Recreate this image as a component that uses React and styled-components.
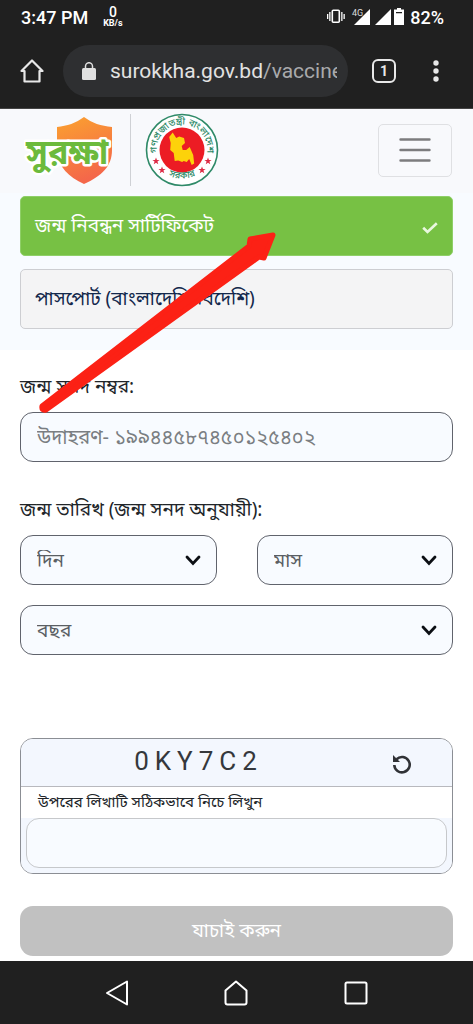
import React, { useState } from "react";
import styled, { createGlobalStyle } from "styled-components";

const bangla = `"Noto Sans Bengali", "Noto Sans", "Open Sans", sans-serif`

const options = [
    { name: 'birth', label: 'জন্ম নিবন্ধন সার্টিফিকেট' },
    { name: 'passport', label: 'পাসপোর্ট (বাংলাদেশি/বিদেশি)' },
]

export default function App(){
    const [type, setType] = useState('birth')
    const [captcha, setCaptcha] = useState('')

    return(
        <Page>
            <GlobalStyle />
            <StatusBar />
            <BrowserBar />
            <SiteHeader />
            <Options>
                {options.map((option) => (
                    <Option
                        key={option.name}
                        type="button"
                        $active={type === option.name}
                        onClick={() => setType(option.name)}
                    >
                        {option.label}
                        {type === option.name ? <CheckIcon /> : ''}
                    </Option>
                ))}
                <Arrow />
            </Options>
            <Form onSubmit={(e) => e.preventDefault()}>
                <Label htmlFor="number">জন্ম সনদ নম্বর:</Label>
                <Input id="number" placeholder="উদাহরণ- ১৯৯৪৪৫৮৭৪৫০১২৫৪০২" />
                <DateGroup>
                    <Legend>জন্ম তারিখ (জন্ম সনদ অনুযায়ী):</Legend>
                    <DateGrid>
                        <SelectBox label="দিন" />
                        <SelectBox label="মাস" />
                        <SelectBox label="বছর" wide />
                    </DateGrid>
                </DateGroup>
                <Captcha>
                    <CaptchaHead>
                        <Code>0KY7C2</Code>
                        <Refresh type="button" aria-label="Refresh"><RefreshIcon /></Refresh>
                    </CaptchaHead>
                    <CaptchaLabel htmlFor="captcha">উপরের লিখাটি সঠিকভাবে নিচে লিখুন</CaptchaLabel>
                    <CaptchaBody>
                        <CaptchaInput id="captcha" value={captcha} onChange={(e) => setCaptcha(e.target.value)} />
                    </CaptchaBody>
                </Captcha>
                <Submit type="submit">যাচাই করুন</Submit>
            </Form>
            <NavBar />
        </Page>
    )
}

function StatusBar(){
    return(
        <Status>
            <Clock>3:47 PM</Clock>
            <Speed><b>0</b><small>KB/s</small></Speed>
            <svg width="80" height="20" viewBox="0 0 80 20" fill="#fff">
                <rect x="6.3" y="3.3" width="7" height="12" rx="1" fill="none" stroke="#fff" strokeWidth="1.6" />
                <path d="M1 7h1.3v5H1zM3.2 5h1.3v9H3.2zM15.2 5h1.3v9h-1.3zM17.5 7h1.3v5h-1.3z" />
                <text x="26" y="9" fontSize="9" fontFamily="Roboto, sans-serif" fill="#ddd">4G</text>
                <path d="M44 2v16H28zM65 2v16H49z" />
                <path d="M71 1h4v1.5h3V18H68V2.5h3zM70 5v1.3h6V5z" fillRule="evenodd" />
            </svg>
            <Battery>82%</Battery>
        </Status>
    )
}

function BrowserBar(){
    return(
        <Browser>
            <IconButton type="button" aria-label="Home">
                <svg width="24" height="24" viewBox="0 0 24 24" fill="none" stroke="#e8e8e8" strokeWidth="2.2" strokeLinejoin="round" strokeLinecap="round">
                    <path d="M1.500 12L12 1.500 22.500 12H19.500V22.500H4.500V12z" />
                </svg>
            </IconButton>
            <Address>
                <svg width="14" height="18" viewBox="0 0 14 18">
                    <rect y="6" width="14" height="12" rx="1.5" fill="#e0e0e0" />
                    <path d="M3.500 7V4.200a3.500 3.500 0 0 1 7 0V7" fill="none" stroke="#e0e0e0" strokeWidth="1.5" />
                </svg>
                <Url>surokkha.gov.bd<span>/vaccine</span></Url>
            </Address>
            <TabCount type="button">1</TabCount>
            <IconButton type="button" aria-label="Menu">
                <svg width="8" height="24" viewBox="0 0 8 24" fill="#e8e8e8">
                    <circle cx="4" cy="4" r="2.7" />
                    <circle cx="4" cy="12" r="2.7" />
                    <circle cx="4" cy="20" r="2.7" />
                </svg>
            </IconButton>
        </Browser>
    )
}

function SiteHeader(){
    return(
        <Header>
            <Logo />
            <Divider />
            <Seal />
            <Toggler type="button" aria-label="Toggle navigation">
                <svg width="32" height="26" viewBox="0 0 32 26" stroke="#7c7c7e" strokeWidth="2.4" strokeLinecap="round">
                    <path d="M1.500 2.500h29M1.500 13h29M1.500 23.500h29" />
                </svg>
            </Toggler>
        </Header>
    )
}

function Logo(){
    return(
        <svg width="90" height="72" viewBox="0 0 90 72">
            <defs>
                <linearGradient id="shield" x1="0" y1="0" x2="0.3" y2="1">
                    <stop offset="0" stopColor="#fba22f" />
                    <stop offset="1" stopColor="#f4674a" />
                </linearGradient>
            </defs>
            <path d="M60 3c8 6 17 9 28 10v23c0 16-10 26-28 34-15-7-26-17-27-32V13c10-1 19-4 27-10z" fill="url(#shield)" />
            <text
                x="2" y="50" fontFamily={bangla} fontSize="34" fontWeight="700"
                fill="#6cba3c" stroke="#fff" strokeWidth="5" strokeLinejoin="round" paintOrder="stroke"
            >
                সুরক্ষা
            </text>
        </svg>
    )
}

function Seal(){
    return(
        <svg width="74" height="74" viewBox="0 0 74 74">
            <defs>
                <path id="top" d="M13.400 46A25.300 25.300 0 1 1 60.600 46" />
                <path id="bottom" d="M10 50.500A31.800 31.800 0 0 0 64 50.500" />
            </defs>
            <circle cx="37" cy="37" r="35.5" fill="#fff" stroke="#2f8a68" strokeWidth="1.6" />
            <circle cx="37" cy="37" r="22.5" fill="#ec1c24" />
            <path d="M27.700 19.500l3.500 5.500 3-1.500 4.800 1.500 1 5-3.300 3 1 4 3.500 0 3.500-3 3.500 8 1 8.500-2.500 1.500-2.500-6-2.500 3-3-1-1.500 1-4-1.500-3.500.5-1-8-3.500-3 .5-7-1.500-6z" fill="#fdd20a" />
            <g fontFamily={bangla} fontWeight="500" fill="#2f8a68" fontSize="9.5">
                <text textAnchor="middle"><textPath href="#top" startOffset="50%">গণপ্রজাতন্ত্রী বাংলাদেশ</textPath></text>
                <text textAnchor="middle"><textPath href="#bottom" startOffset="50%">সরকার</textPath></text>
            </g>
            <g fill="#dd2c45">
                {[[11, 48], [17, 57], [57, 57], [63, 48]].map(([x, y]) => (
                    <path key={x} transform={`translate(${x} ${y}) scale(1.2)`} d="M0-3L.8-.9 3-.9 1.200.5 1.900 2.700 0 1.400-1.900 2.700-1.200.5-3-.9-.8-.9z" />
                ))}
            </g>
        </svg>
    )
}

function CheckIcon(){
    return(
        <svg width="16" height="12" viewBox="0 0 16 12" fill="none" stroke="#e9f8df" strokeWidth="2.6">
            <path d="M1.200 5.800L5.500 10 14.800 1.200" />
        </svg>
    )
}

function RefreshIcon(){
    return(
        <svg width="20" height="20" viewBox="0 0 20 20" fill="none" stroke="#303236" strokeWidth="2.6">
            <path d="M2.300 11A7.700 7.700 0 1 0 4.600 5.200" />
            <path d="M1 1V8H8z" fill="#303236" stroke="none" />
        </svg>
    )
}

function Arrow(){
    return(
        <ArrowSvg width="240" height="184" viewBox="0 0 240 184" fill="#fc2115" stroke="#fc2115" strokeWidth="5" strokeLinejoin="round">
            <path d="M4 175L211 15 212 8 235 4 226 27 221 26 8 179Q3 180 4 175z" />
        </ArrowSvg>
    )
}

function SelectBox({ label, wide }){
    return(
        <SelectWrap $wide={wide}>
            <Select aria-label={label} defaultValue="">
                <option value="">{label}</option>
            </Select>
            <svg width="16" height="11" viewBox="0 0 16 11" fill="none" stroke="#0c0f14" strokeWidth="2.8" strokeLinecap="round">
                <path d="M2 2L8 8.500 14 2" />
            </svg>
        </SelectWrap>
    )
}

function NavBar(){
    return(
        <Nav>
            <IconButton type="button" aria-label="Back">
                <NavIcon viewBox="0 0 26 26"><path d="M23 1.500V24.500L3 13z" /></NavIcon>
            </IconButton>
            <IconButton type="button" aria-label="Home screen">
                <NavIcon viewBox="0 0 26 26"><path d="M2.500 10.500L13 1.500 23.500 10.500V22.500a2 2 0 0 1-2 2H4.500a2 2 0 0 1-2-2z" /></NavIcon>
            </IconButton>
            <IconButton type="button" aria-label="Recent apps">
                <NavIcon viewBox="0 0 26 26"><rect x="2.5" y="2.5" width="21" height="21" rx="1.5" /></NavIcon>
            </IconButton>
        </Nav>
    )
}


const GlobalStyle = createGlobalStyle`
    *{
        box-sizing: border-box;
    }

    body{
        margin: 0;
        background-color: white;
    }

    button{
        font: inherit;
        cursor: pointer;
    }

    svg{
        display: block;
        flex: none;
    }
`;

const Page = styled.div`
    display: flex;
    flex-direction: column;
    min-height: 100vh;
    overflow-x: hidden;

    font-family: ${bangla};
    font-size: 19px;
    color: #212529;
`;

const Status = styled.div`
    display: flex;
    align-items: center;
    height: 34px;
    padding: 0 29px 0 21px;

    font-family: Roboto, sans-serif;
    background-color: #202020;
    color: white;
`;

const Clock = styled.span`
    font-size: 18px;
    font-weight: 500;
`;

const Speed = styled.span`
    display: flex;
    flex-direction: column;
    align-items: center;
    margin: 0 auto 0 15px;

    b{
        font-size: 14px;
        line-height: 13px;
        font-weight: 500;
    }

    small{
        font-size: 9px;
        line-height: 9px;
        font-weight: 700;
    }
`;

const Battery = styled.span`
    margin-left: 4px;
    font-size: 18px;
    font-weight: 500;
`;

const Browser = styled.div`
    display: flex;
    align-items: center;
    height: 75px;
    padding: 0 33px 0 20px;

    font-family: Roboto, sans-serif;
    background-color: #202020;
    border-bottom: 1px solid #444;
`;

const IconButton = styled.button`
    padding: 0;
    border: none;
    background: none;
`;

const Address = styled.div`
    display: flex;
    flex: 1;
    align-items: center;
    gap: 14px;
    min-width: 0;
    height: 52px;
    margin: 0 24px 0 19px;
    padding: 0 11px 0 19px;

    border-radius: 26px;
    background-color: #2e2f31;
`;

const Url = styled.span`
    overflow: hidden;
    white-space: nowrap;
    font-size: 21px;
    color: #e2e2e2;

    span{
        color: #a9aaac;
    }
`;

const TabCount = styled.button`
    width: 24px;
    height: 24px;
    margin-right: 36px;
    padding: 0;

    border: 2px solid #e8e8e8;
    border-radius: 6px;
    background: none;
    color: #e8e8e8;

    && {
        font-size: 14px;
        font-weight: 700;
        line-height: 20px;
    }
`;

const Header = styled.header`
    display: flex;
    align-items: center;
    height: 84px;
    padding: 0 21px 2px 24px;
    background-color: #f8f9fc;
`;

const Divider = styled.div`
    width: 1px;
    height: 72px;
    margin: 0 14px 0 16px;
    background-color: #cfd1d5;
`;

const Toggler = styled.button`
    display: flex;
    align-items: center;
    justify-content: center;
    width: 74px;
    height: 53px;
    margin-left: auto;

    border: 1px solid #dfe0e3;
    border-radius: 5px;
    background: none;
`;

const Options = styled.section`
    position: relative;
    display: flex;
    flex-direction: column;
    gap: 13px;
    padding: 3px 20px 21px;
    background-color: #f8fbff;
`;

const Option = styled.button`
    display: flex;
    align-items: center;
    justify-content: space-between;
    height: 60px;
    padding: 3px 14px 0;

    border: 1px solid ${props => props.$active ? '#8fcf68' : '#cdced2'};
    border-radius: 5px;
    background-color: ${props => props.$active ? '#77c144' : '#f4f4f5'};
    color: ${props => props.$active ? 'white' : '#13284c'};
`;

const ArrowSvg = styled.svg`
    position: absolute;
    top: 38px;
    left: 38px;
    pointer-events: none;
`;

const Form = styled.form`
    display: flex;
    flex-direction: column;
    padding: 21px 20px 5px;
`;

const Label = styled.label`
    line-height: 36px;
    margin-bottom: 5px;
`;

const Input = styled.input`
    width: 100%;
    height: 50px;
    padding: 4px 16px 0;

    border: 1px solid #60636c;
    border-radius: 13px;
    background-color: #f8fbff;
    font: inherit;
    font-size: 20px;
    color: #495057;

    &::placeholder{
        color: #7a7e82;
        opacity: 1;
    }
`;

const DateGroup = styled.fieldset`
    min-width: 0;
    margin: 32px 0 0;
    padding: 0;
    border: none;
`;

const Legend = styled.legend`
    padding: 0;
    margin-bottom: 5px;
    line-height: 36px;
`;

const DateGrid = styled.div`
    display: grid;
    grid-template-columns: 1fr 1fr;
    gap: 20px 40px;
`;

const SelectWrap = styled.div`
    position: relative;
    grid-column: ${props => props.$wide ? '1 / -1' : 'auto'};

    svg{
        position: absolute;
        top: 20px;
        right: 16px;
        pointer-events: none;
    }
`;

const Select = styled.select`
    width: 100%;
    height: 50px;
    padding: 4px 16px 0;

    appearance: none;
    border: 1px solid #60636c;
    border-radius: 13px;
    background-color: #f8fbff;
    font: inherit;
    color: #5a5e63;
`;

const Captcha = styled.div`
    display: flex;
    flex-direction: column;
    margin-top: 83px;

    border: 1px solid #8b8e94;
    border-radius: 13px;
    overflow: hidden;
`;

const CaptchaHead = styled.div`
    display: flex;
    align-items: center;
    height: 48px;
    padding-right: 40px;

    border-bottom: 1px solid #b8b9be;
    background-color: #f3f7fe;
`;

const Code = styled.span`
    flex: 1;
    padding: 0 16px 4px 0;
    text-align: center;
    font-family: Roboto, sans-serif;
    font-size: 26px;
    letter-spacing: 6px;
    color: #35383c;
`;

const Refresh = styled(IconButton)`
    margin-top: 2px;
`;

const CaptchaLabel = styled.label`
    padding: 1px 0 0 17px;
    font-size: 15px;
    line-height: 30px;
`;

const CaptchaBody = styled.div`
    padding: 0 5px 5px;
    background-color: #f3f7fe;
`;

const CaptchaInput = styled(Input)`
    display: block;
    border-color: #c6c8cb;
`;

const Submit = styled.button`
    height: 50px;
    margin-top: 32px;
    padding-top: 4px;

    border: none;
    border-radius: 13px;
    background-color: #c1c1c1;
    color: white;
`;

const Nav = styled.nav`
    display: flex;
    align-items: center;
    justify-content: space-around;
    height: 63px;
    margin-top: auto;
    padding: 0 57px;
    background-color: #202020;
`;

const NavIcon = styled.svg`
    width: 26px;
    height: 26px;
    fill: none;
    stroke: white;
    stroke-width: 2px;
    stroke-linejoin: round;
`;
